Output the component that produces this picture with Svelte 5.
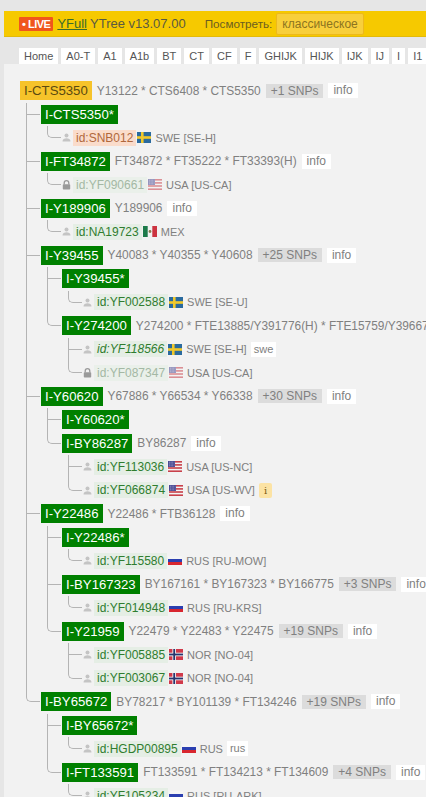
<script>
	const tabs = ['Home', 'A0-T', 'A1', 'A1b', 'BT', 'CT', 'CF', 'F', 'GHIJK', 'HIJK', 'IJK', 'IJ', 'I', 'I1'];

	const leaf = (id, flag, geo, extra = {}) => ({ id, flag, geo, ...extra });
	const node = (name, snps, more, children = []) => ({ name, snps, more, children });

	const root = {
		name: 'I-CTS5350',
		snps: 'Y13122 * CTS6408 * CTS5350',
		more: '+1 SNPs',
		root: true,
		children: [
			node('I-CTS5350*', '', '', [leaf('id:SNB012', 'se', 'SWE [SE-H]', { tone: 'ancient' })]),
			node('I-FT34872', 'FT34872 * FT35222 * FT33393(H)', '', [leaf('id:YF090661', 'us', 'USA [US-CA]', { locked: true })]),
			node('I-Y189906', 'Y189906', '', [leaf('id:NA19723', 'mx', 'MEX')]),
			node('I-Y39455', 'Y40083 * Y40355 * Y40608', '+25 SNPs', [
				node('I-Y39455*', '', '', [leaf('id:YF002588', 'se', 'SWE [SE-U]')]),
				node('I-Y274200', 'Y274200 * FTE13885/Y391776(H) * FTE15759/Y396671', '', [
					leaf('id:YF118566', 'se', 'SWE [SE-H]', { italic: true, tag: 'swe' }),
					leaf('id:YF087347', 'us', 'USA [US-CA]', { locked: true })
				])
			]),
			node('I-Y60620', 'Y67886 * Y66534 * Y66338', '+30 SNPs', [
				node('I-Y60620*'),
				node('I-BY86287', 'BY86287', '', [
					leaf('id:YF113036', 'us', 'USA [US-NC]'),
					leaf('id:YF066874', 'us', 'USA [US-WV]', { note: true })
				])
			]),
			node('I-Y22486', 'Y22486 * FTB36128', '', [
				node('I-Y22486*', '', '', [leaf('id:YF115580', 'ru', 'RUS [RU-MOW]')]),
				node('I-BY167323', 'BY167161 * BY167323 * BY166775', '+3 SNPs', [leaf('id:YF014948', 'ru', 'RUS [RU-KRS]')]),
				node('I-Y21959', 'Y22479 * Y22483 * Y22475', '+19 SNPs', [
					leaf('id:YF005885', 'no', 'NOR [NO-04]'),
					leaf('id:YF003067', 'no', 'NOR [NO-04]')
				])
			]),
			node('I-BY65672', 'BY78217 * BY101139 * FT134246', '+19 SNPs', [
				node('I-BY65672*', '', '', [leaf('id:HGDP00895', 'ru', 'RUS', { tag: 'rus' })]),
				node('I-FT133591', 'FT133591 * FT134213 * FT134609', '+4 SNPs', [leaf('id:YF105234', 'ru', 'RUS [RU-ARK]')])
			])
		]
	};
</script>

{#snippet flag(code)}
	<svg class="flag" width="14" height="11" viewBox="0 0 14 11">
		{#if code === 'se'}
			<rect width="14" height="11" fill="#2a6a9e" />
			<rect x="4" width="2.6" height="11" fill="#f0c92c" />
			<rect y="4.2" width="14" height="2.6" fill="#f0c92c" />
		{:else if code === 'us'}
			<rect width="14" height="11" fill="#f4f4f4" />
			<rect width="14" height="1.6" fill="#c8404a" />
			<rect y="3.1" width="14" height="1.6" fill="#c8404a" />
			<rect y="6.2" width="14" height="1.6" fill="#c8404a" />
			<rect y="9.4" width="14" height="1.6" fill="#c8404a" />
			<rect width="7" height="6" fill="#4a4a94" />
			<path d="M1 1.2 H6.4 M1 3 H6.4 M1 4.8 H6.4" stroke="#c9c9e2" stroke-width="0.7" stroke-dasharray="0.8 0.9" />
		{:else if code === 'mx'}
			<rect width="14" height="11" fill="#f2f2f2" />
			<rect width="4.7" height="11" fill="#1d7a4a" />
			<rect x="9.3" width="4.7" height="11" fill="#cc3340" />
			<circle cx="7" cy="5.5" r="1.4" fill="#8a7a4a" />
		{:else if code === 'ru'}
			<rect y="1" width="14" height="3" fill="#f5f5f5" />
			<rect y="4" width="14" height="3" fill="#2b3fb0" />
			<rect y="7" width="14" height="3" fill="#d8262f" />
		{:else if code === 'no'}
			<rect width="14" height="11" fill="#d0394a" />
			<rect x="3.4" width="3.6" height="11" fill="#f4f4f4" />
			<rect y="3.7" width="14" height="3.6" fill="#f4f4f4" />
			<rect x="4.3" width="1.8" height="11" fill="#27346e" />
			<rect y="4.6" width="14" height="1.8" fill="#27346e" />
		{/if}
	</svg>
{/snippet}

{#snippet person()}
	<svg class="mark" width="9" height="9" viewBox="0 0 9 9">
		<circle cx="4.5" cy="2.4" r="2" fill="#c4c4c4" />
		<path d="M0.5 8.5 C0.5 5.8 2.4 5.2 4.5 5.2 C6.6 5.2 8.5 5.8 8.5 8.5 Z" fill="#c4c4c4" />
	</svg>
{/snippet}

{#snippet padlock()}
	<svg class="mark" width="9" height="10" viewBox="0 0 9 10">
		<path d="M2.2 4.5 V3 a2.3 2.3 0 0 1 4.6 0 V4.5" fill="none" stroke="#9a9a9a" stroke-width="1.3" />
		<rect x="0.8" y="4.3" width="7.4" height="5.2" rx="0.8" fill="#9a9a9a" />
	</svg>
{/snippet}

{#snippet branch(item)}
	{#if item.id}
		<li class="row leaf" class:locked={item.locked}>
			<div class="line">
				{#if item.locked}{@render padlock()}{:else}{@render person()}{/if}
				<span class="sample" class:ancient={item.tone === 'ancient'} class:italic={item.italic}>{item.id}</span>
				{@render flag(item.flag)}
				<span class="geo">{item.geo}</span>
				{#if item.tag}<span class="tag">{item.tag}</span>{/if}
				{#if item.note}<span class="note">i</span>{/if}
			</div>
		</li>
	{:else}
		<li class="row" class:top={item.root}>
			<div class="line">
				<span class="clade" class:gold={item.root}>{item.name}</span>
				{#if item.snps}<span class="snps">{item.snps}</span>{/if}
				{#if item.more}<span class="more">{item.more}</span>{/if}
				{#if item.snps}<span class="tag info">info</span>{/if}
			</div>
			{#if item.children.length}
				<ul>
					{#each item.children as child}
						{@render branch(child)}
					{/each}
				</ul>
			{/if}
		</li>
	{/if}
{/snippet}

<div class="page">
	<header>
		<span class="live"><i>•</i> LIVE</span>
		<a href="#top">YFull</a>
		<span class="title">YTree v13.07.00</span>
		<span class="view">Посмотреть:</span>
		<span class="mode">классическое</span>
	</header>

	<nav>
		{#each tabs as tab}
			<span class="tab">{tab}</span>
		{/each}
	</nav>

	<main>
		<ul class="tree">
			{@render branch(root)}
		</ul>
	</main>
</div>

<style>
	:global(body) {
		background: #e6e6e6;
		overflow: hidden;
	}

	.page {
		width: 426px;
		height: 797px;
		overflow: hidden;
		padding-top: 11px;
		box-sizing: border-box;
		font-family: 'Liberation Sans', Arial, sans-serif;
		font-size: 12px;
		color: #808080;
	}

	header {
		margin-left: 4px;
		height: 26px;
		box-sizing: border-box;
		background: #f6c900;
		border-bottom: 1px solid #e3ba0a;
		display: flex;
		align-items: center;
		padding-left: 15px;
		white-space: nowrap;
	}

	.live {
		background: #f0561d;
		color: #fff;
		font-size: 11px;
		font-weight: bold;
		padding: 0 3px;
		line-height: 14px;
		letter-spacing: -0.5px;
		border-radius: 1px;
	}

	.live i {
		font-style: normal;
	}

	header a {
		color: #3c6b2c;
		font-size: 13px;
		margin-left: 4px;
	}

	.title {
		color: #5a5a40;
		font-size: 13px;
		margin-left: 3px;
	}

	.view {
		color: #6b5d20;
		font-size: 11.7px;
		margin-left: 19px;
	}

	.mode {
		margin-left: 4px;
		color: #8c7420;
		background: #f8cf3c;
		border: 1px solid #edb81c;
		border-radius: 2px;
		padding: 0 5px;
		line-height: 20px;
	}

	nav {
		display: flex;
		gap: 3px;
		margin: 11px 0 0 19px;
		white-space: nowrap;
	}

	.tab {
		background: #fff;
		color: #555;
		font-size: 11px;
		line-height: 16px;
		padding: 0 5px;
		flex: none;
	}

	main {
		margin-left: 4px;
		background: #f2f2f2;
		padding: 15px 0 0 16px;
		height: 720px;
		white-space: nowrap;
	}

	ul {
		list-style: none;
		margin: 0;
		padding: 0;
	}

	.row ul {
		margin-left: 6px;
	}

	.row .row {
		position: relative;
		padding-left: 15px;
	}

	/* tree connectors */
	.row .row::before {
		content: '';
		position: absolute;
		left: 0;
		top: 0;
		bottom: 0;
		width: 1px;
		background: #b4b4b4;
	}

	.row .row::after {
		content: '';
		position: absolute;
		left: 0;
		top: 0;
		width: 14px;
		height: 12px;
		box-sizing: border-box;
		border-bottom: 1px solid #b4b4b4;
	}

	.row .row:last-child::before {
		display: none;
	}

	.row .row:last-child::after {
		border-left: 1px solid #b4b4b4;
		border-bottom-left-radius: 5px;
	}

	.line {
		display: flex;
		align-items: center;
		gap: 5px;
		height: 23.5px;
	}

	.clade {
		background: #008000;
		color: #fff;
		font-size: 13.2px;
		line-height: 19px;
		padding: 0 4px;
		flex: none;
	}

	.clade.gold {
		background: #f6c32a;
		color: #5b4a10;
	}

	.snps {
		font-size: 11.9px;
	}

	.more {
		background: #dcdcdc;
		line-height: 14px;
		padding: 0 5px;
	}

	.tag {
		background: #fff;
		line-height: 15px;
		padding: 0 3px;
		font-size: 11px;
	}

	.tag.info {
		font-size: 12px;
		padding: 0 5px;
		line-height: 15px;
	}

	.leaf .line {
		gap: 0;
	}

	.mark {
		margin-right: 2px;
		flex: none;
	}

	.sample {
		background: #e5eee5;
		color: #2f7d2f;
		line-height: 16px;
		padding: 0 3px;
	}

	.sample.ancient {
		background: #fadccb;
		color: #b0683c;
	}

	.sample.italic {
		font-style: italic;
	}

	.locked .sample {
		color: #a4b8a4;
		background: #eaf0ea;
	}

	.locked .flag {
		opacity: 0.55;
	}

	.flag {
		margin-left: 1px;
		flex: none;
	}

	.geo {
		font-size: 11px;
		margin-left: 4px;
	}

	.leaf .tag {
		margin-left: 4px;
	}

	.note {
		margin-left: 4px;
		background: #fce3a4;
		color: #7a5a14;
		font-family: 'DejaVu Serif', serif;
		font-size: 10px;
		line-height: 15px;
		padding: 0 5px;
		border-radius: 2px;
	}
</style>
